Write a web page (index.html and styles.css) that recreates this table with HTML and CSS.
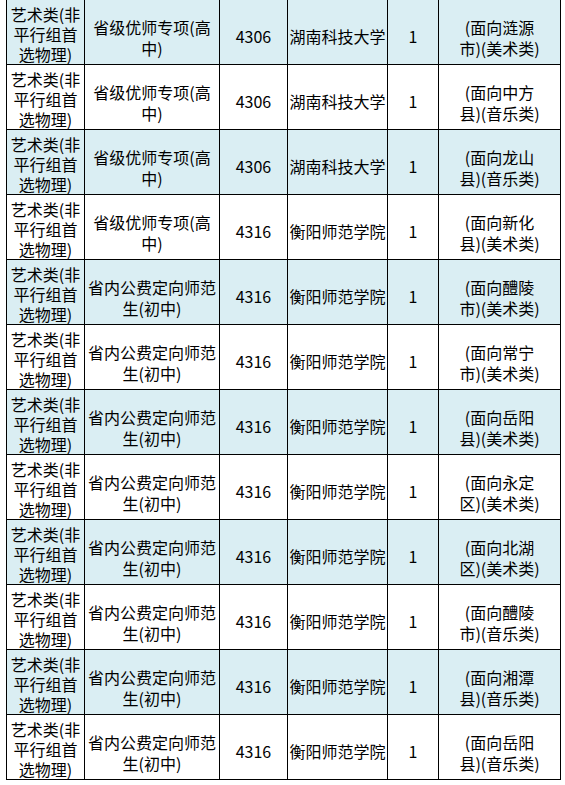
FILE: index.html
```html
<!DOCTYPE html>
<html lang="zh-CN">
<head>
<meta charset="utf-8">
<title>艺术类招生计划</title>
<link rel="stylesheet" href="styles.css">
</head>
<body>
<table class="plan">
<colgroup>
<col class="c1"><col class="c2"><col class="c3"><col class="c4"><col class="c5"><col class="c6">
</colgroup>
<tbody>
<tr class="blue"><td class="cat">艺术类(非<br>平行组首<br>选物理)</td><td class="type">省级优师专项(高<br>中)</td><td>4306</td><td>湖南科技大学</td><td>1</td><td class="note">(面向涟源<br>市)(美术类)</td></tr>
<tr><td class="cat">艺术类(非<br>平行组首<br>选物理)</td><td class="type">省级优师专项(高<br>中)</td><td>4306</td><td>湖南科技大学</td><td>1</td><td class="note">(面向中方<br>县)(音乐类)</td></tr>
<tr class="blue"><td class="cat">艺术类(非<br>平行组首<br>选物理)</td><td class="type">省级优师专项(高<br>中)</td><td>4306</td><td>湖南科技大学</td><td>1</td><td class="note">(面向龙山<br>县)(音乐类)</td></tr>
<tr><td class="cat">艺术类(非<br>平行组首<br>选物理)</td><td class="type">省级优师专项(高<br>中)</td><td>4316</td><td>衡阳师范学院</td><td>1</td><td class="note">(面向新化<br>县)(美术类)</td></tr>
<tr class="blue"><td class="cat">艺术类(非<br>平行组首<br>选物理)</td><td class="type">省内公费定向师范<br>生(初中)</td><td>4316</td><td>衡阳师范学院</td><td>1</td><td class="note">(面向醴陵<br>市)(美术类)</td></tr>
<tr><td class="cat">艺术类(非<br>平行组首<br>选物理)</td><td class="type">省内公费定向师范<br>生(初中)</td><td>4316</td><td>衡阳师范学院</td><td>1</td><td class="note">(面向常宁<br>市)(美术类)</td></tr>
<tr class="blue"><td class="cat">艺术类(非<br>平行组首<br>选物理)</td><td class="type">省内公费定向师范<br>生(初中)</td><td>4316</td><td>衡阳师范学院</td><td>1</td><td class="note">(面向岳阳<br>县)(美术类)</td></tr>
<tr><td class="cat">艺术类(非<br>平行组首<br>选物理)</td><td class="type">省内公费定向师范<br>生(初中)</td><td>4316</td><td>衡阳师范学院</td><td>1</td><td class="note">(面向永定<br>区)(美术类)</td></tr>
<tr class="blue"><td class="cat">艺术类(非<br>平行组首<br>选物理)</td><td class="type">省内公费定向师范<br>生(初中)</td><td>4316</td><td>衡阳师范学院</td><td>1</td><td class="note">(面向北湖<br>区)(美术类)</td></tr>
<tr><td class="cat">艺术类(非<br>平行组首<br>选物理)</td><td class="type">省内公费定向师范<br>生(初中)</td><td>4316</td><td>衡阳师范学院</td><td>1</td><td class="note">(面向醴陵<br>市)(音乐类)</td></tr>
<tr class="blue"><td class="cat">艺术类(非<br>平行组首<br>选物理)</td><td class="type">省内公费定向师范<br>生(初中)</td><td>4316</td><td>衡阳师范学院</td><td>1</td><td class="note">(面向湘潭<br>县)(音乐类)</td></tr>
<tr><td class="cat">艺术类(非<br>平行组首<br>选物理)</td><td class="type">省内公费定向师范<br>生(初中)</td><td>4316</td><td>衡阳师范学院</td><td>1</td><td class="note">(面向岳阳<br>县)(音乐类)</td></tr>
</tbody>
</table>
</body>
</html>
```

FILE: styles.css
```css
html, body {
  margin: 0;
  padding: 0;
  background: #ffffff;
}

.plan {
  margin: -1px 0 0 6px;
  width: 554px;
  table-layout: fixed;
  border-collapse: collapse;
  font-family: "Noto Sans CJK SC", "Noto Sans", sans-serif;
  font-size: 16px;
  line-height: 20px;
  color: #000000;
}

.c1 { width: 78px; }
.c2 { width: 135px; }
.c3 { width: 68px; }
.c4 { width: 100px; }
.c5 { width: 51px; }
.c6 { width: 122px; }

.plan tr {
  height: 65px;
}

.plan td {
  border: 1px solid #000000;
  padding: 7px 0 0 0;
  text-align: center;
  vertical-align: middle;
  white-space: nowrap;
  overflow: hidden;
}

.plan td.cat {
  padding-top: 4px;
}

.plan td.type,
.plan td.note {
  line-height: 21px;
  padding-top: 11px;
}

.plan tr.blue td {
  background: #daeef3;
}
```
